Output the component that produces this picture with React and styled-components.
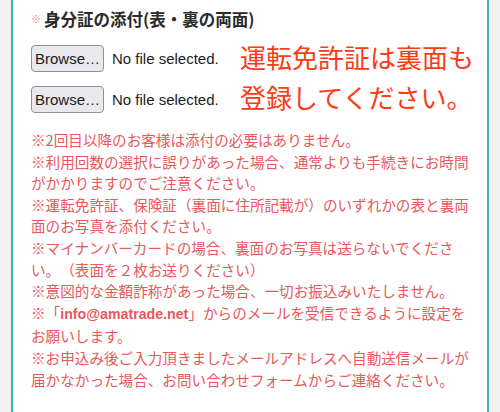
import styled, { createGlobalStyle } from "styled-components";

const GlobalStyle = createGlobalStyle`
  html, body {
    margin: 0;
    padding: 0;
    background: #f1f1f1;
  }
  body {
    font-family: "Noto Sans CJK JP", "Noto Sans", sans-serif;
  }
`;

const notes = [
  "※2回目以降のお客様は添付の必要はありません。",
  "※利用回数の選択に誤りがあった場合、通常よりも手続きにお時間がかかりますのでご注意ください。",
  "※運転免許証、保険証（裏面に住所記載が）のいずれかの表と裏両面のお写真を添付ください。",
  "※マイナンバーカードの場合、裏面のお写真は送らないでください。（表面を２枚お送りください）",
  "※意図的な金額詐称があった場合、一切お振込みいたしません。",
  null,
  "※お申込み後ご入力頂きましたメールアドレスへ自動送信メールが届かなかった場合、お問い合わせフォームからご連絡ください。",
];

const App = () => {
  return (
    <>
      <GlobalStyle />
      <Panel>
        <Heading>
          <Mark>※</Mark>
          <HeadingText>身分証の添付(表・裏の両面)</HeadingText>
        </Heading>
        <UploadArea>
          <FileList>
            {[0, 1].map((i) => (
              <FileRow key={i}>
                <BrowseButton type="button">Browse…</BrowseButton>
                <FileName>No file selected.</FileName>
              </FileRow>
            ))}
          </FileList>
          <Warning>
            運転免許証は裏面も
            <br />
            登録してください。
          </Warning>
        </UploadArea>
        <Notes>
          {notes.map((text, i) =>
            text ? (
              <Note key={i}>{text}</Note>
            ) : (
              <Note key={i}>
                ※「<Mail>info@amatrade.net</Mail>」からのメールを受信できるように設定を
                <br />
                お願いします。
              </Note>
            )
          )}
        </Notes>
      </Panel>
    </>
  );
};

const Panel = styled.div`
  box-sizing: border-box;
  margin-left: 11px;
  width: 478px;
  min-height: 412px;
  background: #fff;
  border-left: 2px solid #3cb4be;
  border-right: 2px solid #3cb4be;
  padding: 8px 0 0 18px;
`;

const Heading = styled.div`
  display: flex;
  align-items: center;
  height: 22px;
`;

const Mark = styled.span`
  font-size: 10px;
  color: #f07c84;
  width: 13px;
  line-height: 22px;
`;

const HeadingText = styled.span`
  font-size: 16.5px;
  font-weight: 700;
  color: #2a2a2a;
  line-height: 22px;
`;

const UploadArea = styled.div`
  display: flex;
  align-items: flex-start;
  margin-top: 15px;
`;

const FileList = styled.div`
  display: flex;
  flex-direction: column;
  gap: 14px;
  width: 209px;
`;

const FileRow = styled.div`
  display: flex;
  align-items: center;
  gap: 8px;
`;

const BrowseButton = styled.button`
  box-sizing: border-box;
  width: 73px;
  height: 27px;
  padding: 0;
  border: 1px solid #8f8f9d;
  border-radius: 4px;
  background: #e9e9ed;
  color: #1b1b1b;
  font-family: "Liberation Sans", Arial, sans-serif;
  font-size: 15px;
`;

const FileName = styled.span`
  font-family: "Liberation Sans", Arial, sans-serif;
  font-size: 15px;
  color: #1b1b1b;
`;

const Warning = styled.div`
  margin-top: -8px;
  font-size: 26px;
  line-height: 40px;
  color: #ff3a17;
  white-space: nowrap;
`;

const Notes = styled.div`
  width: 446px;
  margin-top: 12px;
  color: #e8585c;
  font-size: 14.6px;
  line-height: 21.6px;
  text-spacing-trim: space-all;
`;

const Note = styled.p`
  margin: 0;
`;

const Mail = styled.span`
  font-family: "Liberation Sans", Arial, sans-serif;
  font-size: 14.2px;
  font-weight: 700;
`;

export default App;
